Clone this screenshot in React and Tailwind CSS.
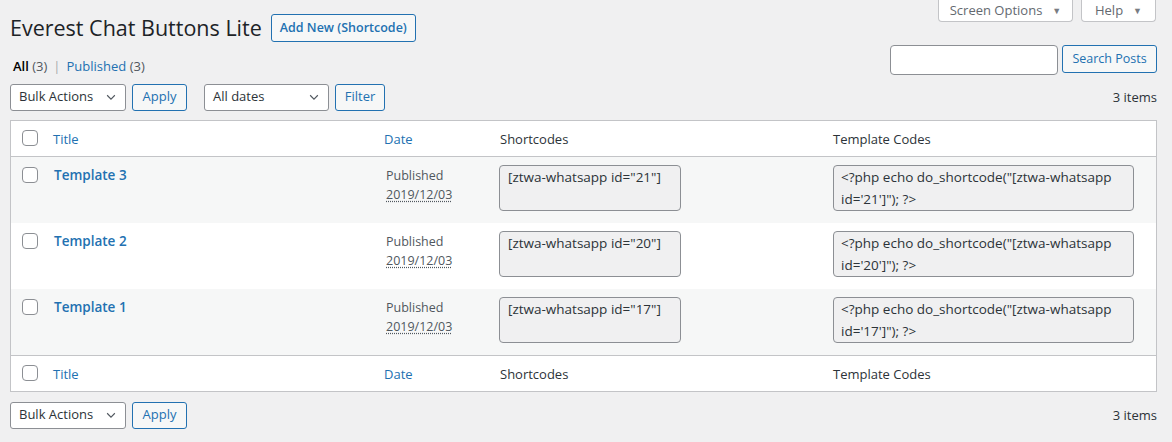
import React from 'react';

const rows = [
  { title: 'Template 3', id: '21', striped: true },
  { title: 'Template 2', id: '20', striped: false },
  { title: 'Template 1', id: '17', striped: true },
];

const cols = 'grid grid-cols-[32px_331px_116px_333px_1fr]';

function Chevron() {
  return (
    <svg width="14" height="14" viewBox="0 0 20 20" className="shrink-0">
      <path d="M4.5 7.5l5.5 5.5 5.5-5.5" fill="none" stroke="#50575e" strokeWidth="1.6" />
    </svg>
  );
}

function Checkbox() {
  return <span className="block w-4 h-4 rounded-[4px] border border-[#8c8f94] bg-white" />;
}

function Select({ label, className }) {
  return (
    <div className={`flex items-center justify-between h-[27px] pl-2 pr-[7px] bg-white border border-[#8c8f94] rounded-[3px] text-[#2c3338] ${className}`}>
      <span>{label}</span>
      <Chevron />
    </div>
  );
}

function Button({ children, className = '' }) {
  return (
    <button type="button" className={`h-[27px] px-[6px] whitespace-nowrap border border-[#2271b1] rounded-[3px] bg-[#f6f7f7] text-[#2271b1] ${className}`}>
      {children}
    </button>
  );
}

function HeadRow({ top }) {
  return (
    <div className={`${cols} h-[36px] items-center bg-white ${top ? 'border-b' : 'border-t'} border-[#c3c4c7] text-[13px]`}>
      <div className="pl-[11px]"><Checkbox /></div>
      <div className="pl-[10px] pt-[3px] text-[#2271b1]">Title</div>
      <div className="pl-[10px] pt-[3px] text-[#2271b1]">Date</div>
      <div className="pl-[10px] pt-[3px] text-[#2c3338]">Shortcodes</div>
      <div className="pl-[10px] pt-[3px] text-[#2c3338]">Template Codes</div>
    </div>
  );
}

function Tablenav({ filters }) {
  return (
    <div className="flex items-center justify-between h-[27px] text-[13px]">
      <div className="flex items-center">
        <Select label="Bulk Actions" className="w-[116px]" />
        <Button className="ml-[6px] w-[55px]">Apply</Button>
        {filters && (
          <>
            <Select label="All dates" className="ml-[17px] w-[125px]" />
            <Button className="ml-[6px] w-[50px]">Filter</Button>
          </>
        )}
      </div>
      <span className="pt-[1px] text-[#2c3338]">3 items</span>
    </div>
  );
}

function MetaTab({ label, className }) {
  return (
    <div className={`flex items-center justify-center gap-[10px] h-[22px] bg-white border border-t-0 border-[#c3c4c7] rounded-b-[4px] text-[#646970] ${className}`}>
      {label} <span className="text-[9px] text-[#787c82]">▼</span>
    </div>
  );
}

export default function App() {
  return (
    <div className="min-h-screen bg-[#f0f0f1] text-[#3c434a] text-[13px] font-['Segoe_UI','Open_Sans',sans-serif]">
      <div className="flex justify-end gap-2 pr-[16px]">
        <MetaTab label="Screen Options" className="w-[135px]" />
        <MetaTab label="Help" className="w-[75px]" />
      </div>

      <div className="pl-[10px] pr-[15px]">
        <div className="flex items-center -mt-2 h-[28px]">
          <h1 className="text-[21.5px] font-normal leading-[30px] text-[#1d2327]">Everest Chat Buttons Lite</h1>
          <span className="ml-[9px] h-[28px] px-[8px] flex items-center border border-[#2271b1] rounded-[3px] bg-[#f6f7f7] text-[#2271b1] text-[12.5px] font-semibold">
            Add New (Shortcode)
          </span>
        </div>

        <div className="flex justify-between items-start mt-[3px]">
          <div className="mt-[12px] pl-[3px]">
            <span className="text-black font-semibold">All</span> <span className="text-[#50575e]">(3)</span>
            <span className="text-[#a7aaad] mx-[6px]">|</span>
            <span className="text-[#2271b1]">Published</span> <span className="text-[#50575e]">(3)</span>
          </div>
          <div className="flex items-start gap-[4px]">
            <div className="w-[168px] h-[30px] bg-white border border-[#8c8f94] rounded-[4px]" />
            <Button className="h-[28px] w-[95px] text-[12.5px]">Search Posts</Button>
          </div>
        </div>

        <div className="mt-[7px]">
          <Tablenav filters />
        </div>

        <div className="mt-[9px] border border-[#c3c4c7] bg-white">
          <HeadRow top />
          {rows.map((r) => (
            <div key={r.id} className={`${cols} h-[66px] items-start ${r.striped ? 'bg-[#f6f7f7]' : 'bg-white'}`}>
              <div className="pl-[11px] pt-[10px]"><Checkbox /></div>
              <div className="pl-[11px] pt-[8px] text-[13.5px] leading-[21px] font-semibold text-[#2271b1]">{r.title}</div>
              <div className="pl-[12px] pt-[9px] leading-[19px] text-[#50575e] text-[12.5px]">
                <div>Published</div>
                <div className="underline decoration-dotted underline-offset-2">2019/12/03</div>
              </div>
              <div className="pl-[9px] pt-[8px]">
                <div className="w-[182px] h-[46px] px-[8px] bg-[#f0f0f1] border border-[#8c8f94] rounded-[4px] text-[13.5px] leading-[22px] text-[#2c3338]">
                  {`[ztwa-whatsapp id="${r.id}"]`}
                </div>
              </div>
              <div className="pl-[10px] pt-[8px]">
                <div className="w-[301px] h-[46px] px-[7px] bg-[#f0f0f1] border border-[#8c8f94] rounded-[4px] text-[13.5px] leading-[22px] text-[#2c3338]">
                  {`<?php echo do_shortcode("[ztwa-whatsapp id='${r.id}']"); ?>`}
                </div>
              </div>
            </div>
          ))}
          <HeadRow />
        </div>

        <div className="mt-[10px]">
          <Tablenav />
        </div>
      </div>
    </div>
  );
}
